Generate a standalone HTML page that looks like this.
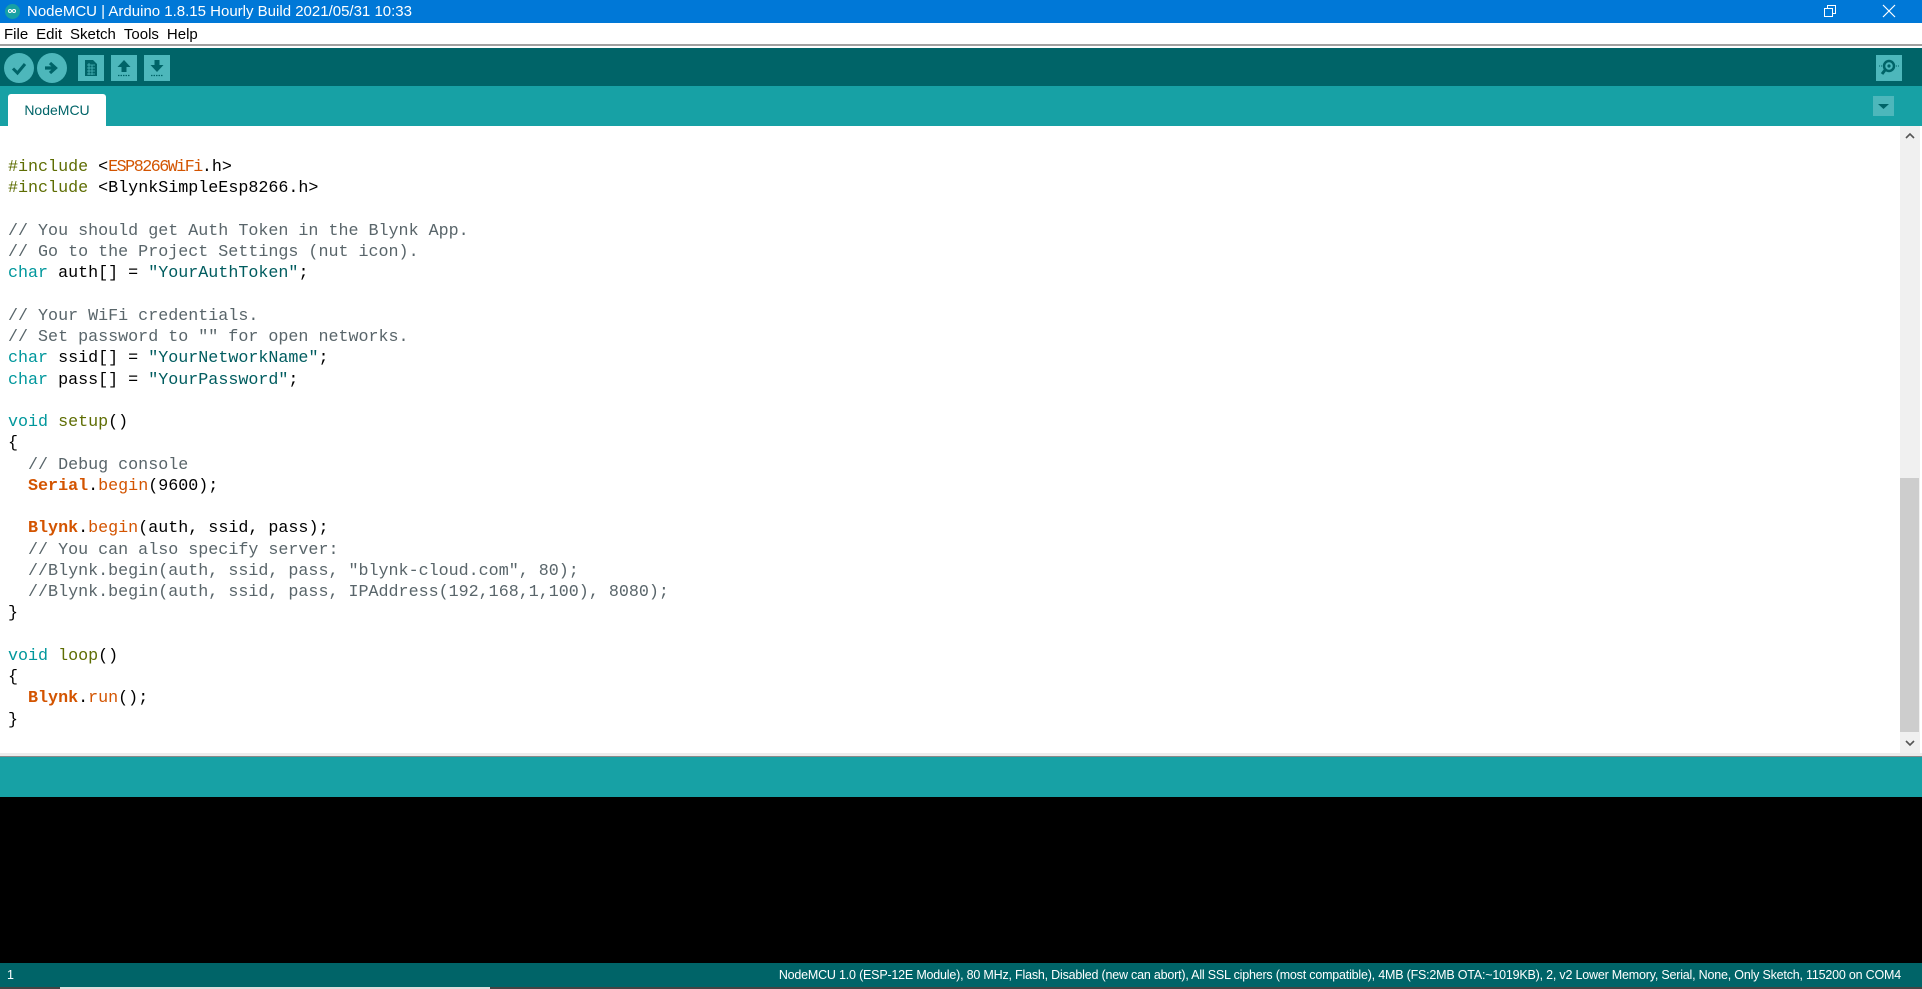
<!DOCTYPE html>
<html><head><meta charset="utf-8"><style>
*{margin:0;padding:0;box-sizing:border-box}
body{width:1922px;height:989px;overflow:hidden;position:relative;background:#fff;font-family:"Liberation Sans",sans-serif}
.abs{position:absolute}
#title{left:0;top:0;width:1922px;height:23px;background:#0078D7;color:#fff;font-size:15px;line-height:23px}
#menu{left:0;top:23px;width:1922px;height:23px;background:#fff;font-size:15px;line-height:23px;border-bottom:2px solid #a0a0a0}
#tool{left:0;top:48px;width:1922px;height:38px;background:#006468}
#tabs{left:0;top:86px;width:1922px;height:40px;background:#17A1A5}
.circ{position:absolute;width:30px;height:30px;border-radius:50%;background:#4DB7BB;top:5px}
.sq{position:absolute;width:26px;height:26px;background:#4DB7BB;top:7px}
#editor{left:0;top:126px;width:1900px;height:627px;background:#fff}
pre{position:absolute;left:8px;top:157px;font-family:"Liberation Mono",monospace;font-size:16.7px;line-height:21.25px;color:#000}
.pp{color:#5E6D03}.kw{color:#00979C}.or{color:#D35400}.cm{color:#59656a}.st{color:#005C5F}.nm{color:#434f54}
</style></head><body>
<div id="title" class="abs">
<div class="abs" style="left:5px;top:4px;width:15px;height:15px;border-radius:50%;background:#17A1A5"></div>
<div class="abs" style="left:8px;top:9px;width:4px;height:4px;border:1.3px solid #fff;border-radius:50%"></div>
<div class="abs" style="left:12px;top:9px;width:4px;height:4px;border:1.3px solid #fff;border-radius:50%"></div>
<span class="abs" style="left:27px;top:0">NodeMCU | Arduino 1.8.15 Hourly Build 2021/05/31 10:33</span>
<svg class="abs" style="left:1822px;top:3px" width="16" height="16"><rect x="2.5" y="5.5" width="8" height="8" fill="none" stroke="#fff"/><path d="M5.5 5.5V2.5H13.5V10.5H10.5" fill="none" stroke="#fff"/></svg>
<svg class="abs" style="left:1881px;top:3px" width="16" height="16"><path d="M2 2L14 14M14 2L2 14" stroke="#fff" stroke-width="1.2"/></svg>
</div>
<div id="menu" class="abs"><span style="margin-left:4px">File</span><span style="margin-left:8px">Edit</span><span style="margin-left:8px">Sketch</span><span style="margin-left:8px">Tools</span><span style="margin-left:8px">Help</span></div>
<div id="tool" class="abs">
<div class="circ" style="left:4px"><svg width="30" height="30"><path d="M9 15.5L13.5 20L21 11" fill="none" stroke="#006468" stroke-width="3"/></svg></div>
<div class="circ" style="left:37px"><svg width="30" height="30"><path d="M8 15H17M13 10L18.5 15L13 20" fill="none" stroke="#006468" stroke-width="3.2"/></svg></div>
<div class="sq" style="left:78px"><svg width="26" height="26"><path d="M7 5H15L19 9V21H7Z" fill="#006468"/><path d="M9 10H17M9 13H17M9 16H17M9 19H17M11 8V20M14 10V20" stroke="#4DB7BB" stroke-width=".8"/></svg></div>
<div class="sq" style="left:111px"><svg width="26" height="26"><path d="M13 5L19.5 12H15.5V17H10.5V12H6.5Z" fill="#006468"/><path d="M7 20.5H19" stroke="#006468" stroke-width="1.2" stroke-dasharray="1.5 1"/></svg></div>
<div class="sq" style="left:144px"><svg width="26" height="26"><path d="M13 17L19.5 10H15.5V5H10.5V10H6.5Z" fill="#006468"/><path d="M7 20.5H19" stroke="#006468" stroke-width="1.2" stroke-dasharray="1.5 1"/></svg></div>
<div class="sq" style="left:1876px"><svg width="26" height="26"><circle cx="13" cy="11" r="5" fill="none" stroke="#006468" stroke-width="2.5"/><circle cx="13" cy="11" r="1.6" fill="#006468"/><path d="M9.5 14.5L6 19" stroke="#006468" stroke-width="3"/><path d="M3 11H6M20 11H24" stroke="#006468" stroke-dasharray="1 1"/></svg></div>
</div>
<div id="tabs" class="abs">
<div class="abs" style="left:8px;top:8px;width:98px;height:32px;background:#fff;border-radius:3px 3px 0 0;color:#006468;font-size:14px;line-height:32px;text-align:center">NodeMCU</div>
<div class="abs" style="left:1873px;top:10px;width:21px;height:20px;background:#4DB7BB"><svg width="21" height="20"><path d="M5 8H16L10.5 13Z" fill="#006468"/></svg></div>
</div>
<div id="editor" class="abs"></div>
<div class="abs" style="left:1900px;top:126px;width:20px;height:627px;background:#f0f0f0"></div>
<div class="abs" style="left:1900px;top:478px;width:19px;height:254px;background:#cdcdcd"></div>
<svg class="abs" style="left:1900px;top:126px" width="20" height="20"><path d="M6 12L10 8L14 12" fill="none" stroke="#555" stroke-width="1.6"/></svg>
<svg class="abs" style="left:1900px;top:733px" width="20" height="20"><path d="M6 8L10 12L14 8" fill="none" stroke="#555" stroke-width="1.6"/></svg>
<pre><span class="pp">#include</span> &lt;<span class="or" style="letter-spacing:-1.5px">ESP8266WiFi</span>.h&gt;
<span class="pp">#include</span> &lt;BlynkSimpleEsp8266.h&gt;

<span class="cm">// You should get Auth Token in the Blynk App.</span>
<span class="cm">// Go to the Project Settings (nut icon).</span>
<span class="kw">char</span> auth[] = <span class="st">"YourAuthToken"</span>;

<span class="cm">// Your WiFi credentials.</span>
<span class="cm">// Set password to "" for open networks.</span>
<span class="kw">char</span> ssid[] = <span class="st">"YourNetworkName"</span>;
<span class="kw">char</span> pass[] = <span class="st">"YourPassword"</span>;

<span class="kw">void</span> <span class="pp">setup</span>()
{
  <span class="cm">// Debug console</span>
  <span class="or"><b>Serial</b></span>.<span class="or">begin</span>(9600);

  <span class="or"><b>Blynk</b></span>.<span class="or">begin</span>(auth, ssid, pass);
  <span class="cm">// You can also specify server:</span>
  <span class="cm">//Blynk.begin(auth, ssid, pass, "blynk-cloud.com", 80);</span>
  <span class="cm">//Blynk.begin(auth, ssid, pass, IPAddress(192,168,1,100), 8080);</span>
}

<span class="kw">void</span> <span class="pp">loop</span>()
{
  <span class="or"><b>Blynk</b></span>.<span class="or">run</span>();
}</pre>
<div class="abs" style="left:0;top:753px;width:1922px;height:4px;background:#ececec;border-bottom:1px solid #888"></div>
<div class="abs" style="left:0;top:757px;width:1922px;height:40px;background:#17A1A5"></div>
<div class="abs" style="left:0;top:797px;width:1922px;height:166px;background:#000"></div>
<div class="abs" style="left:0;top:963px;width:1922px;height:24px;background:#006468;color:#fff;font-size:12.5px;line-height:24px">
<span class="abs" style="left:7px">1</span>
<span class="abs" style="right:21px;letter-spacing:-0.2px">NodeMCU 1.0 (ESP-12E Module), 80 MHz, Flash, Disabled (new can abort), All SSL ciphers (most compatible), 4MB (FS:2MB OTA:~1019KB), 2, v2 Lower Memory, Serial, None, Only Sketch, 115200 on COM4</span>
</div>
<div class="abs" style="left:0;top:987px;width:1922px;height:2px;background:#444"></div>
<div class="abs" style="left:60px;top:987px;width:430px;height:2px;background:#ddd"></div>
</body></html>
